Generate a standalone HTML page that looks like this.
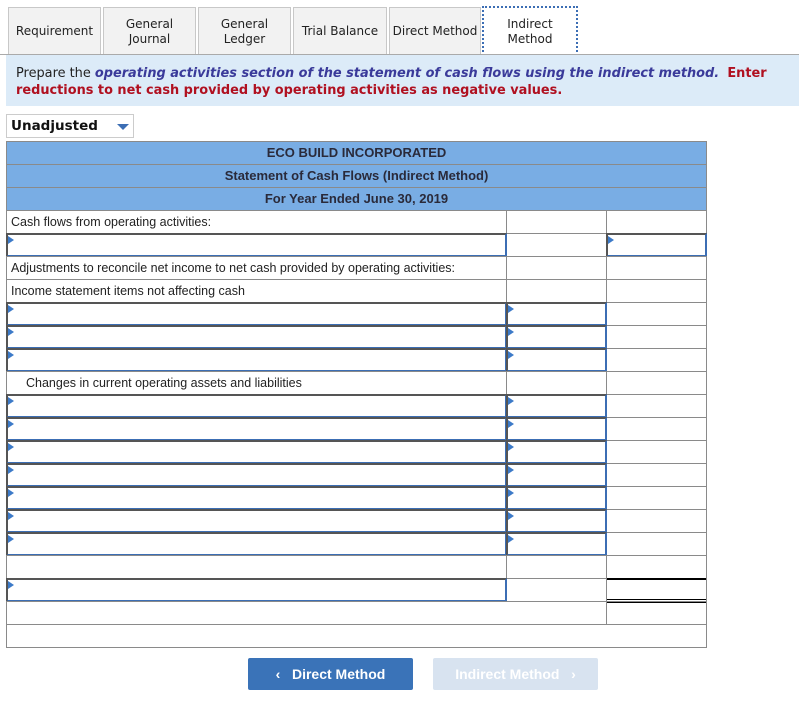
<!DOCTYPE html>
<html><head><meta charset="utf-8"><style>
body{margin:0;width:799px;height:701px;background:#fff;font-family:"DejaVu Sans","Liberation Sans",sans-serif;position:relative;overflow:hidden}
.a{position:absolute;box-sizing:border-box}
.tab{position:absolute;top:7px;height:48px;background:#f2f2f2;border:1px solid #c8c8c8;border-bottom:none;font-size:12px;color:#222;display:flex;align-items:center;justify-content:center;text-align:center;line-height:15px;box-sizing:border-box}
.cell{position:absolute;box-sizing:border-box;border:1px solid #8a8a8a;height:24px;font-family:"Liberation Sans",Arial,sans-serif;font-size:12.5px;color:#222;padding-left:4px;line-height:22px;background:#fff}
.hd{position:absolute;left:6px;width:701px;height:24px;box-sizing:border-box;border:1px solid #8a8a8a;background:#79ade4;font-family:"Liberation Sans",Arial,sans-serif;font-size:13px;font-weight:bold;color:#2a2a3a;text-align:center;line-height:22px}
.inp{position:absolute;box-sizing:border-box;border:2px solid #3c6eb4;border-top-color:#555;border-left-color:#555;height:24px;background:#fff}
.inp.n:before{content:"";position:absolute;left:0;top:1px;border-left:6px solid #3c7ac8;border-top:4px solid transparent;border-bottom:4px solid transparent}
</style></head><body>
<div class="tab" style="left:8px;width:93px">Requirement</div>
<div class="tab" style="left:103px;width:93px">General<br>Journal</div>
<div class="tab" style="left:198px;width:93px">General<br>Ledger</div>
<div class="tab" style="left:293px;width:94px">Trial Balance</div>
<div class="tab" style="left:389px;width:92px">Direct Method</div>
<div class="tab" style="left:482px;width:96px;top:6px;height:50px;background:#fff;border:2px dotted #3c6eb4;border-bottom:none">Indirect<br>Method</div>
<div class="a" style="left:0;top:54px;width:799px;height:1px;background:#aaa"></div>
<div class="a" style="left:6px;top:55px;width:793px;height:51px;background:#dcebf8;padding:10px 10px;font-size:12.9px;line-height:17px;color:#222">Prepare the <b style="color:#3a3a9a;font-style:italic">operating activities section of the statement of cash flows using the indirect method.</b>&nbsp; <b style="color:#b01020">Enter reductions to net cash provided by operating activities as negative values.</b></div>
<div class="a" style="left:6px;top:114px;width:128px;height:24px;border:1px solid #ccc;font-weight:bold;font-size:13.5px;line-height:22px;padding-left:4px;color:#111">Unadjusted<span style="position:absolute;left:110px;top:9px;border-top:6px solid #3c6eb4;border-left:6px solid transparent;border-right:6px solid transparent"></span></div>
<div class="hd" style="top:141px">ECO BUILD INCORPORATED</div>
<div class="hd" style="top:164px">Statement of Cash Flows (Indirect Method)</div>
<div class="hd" style="top:187px">For Year Ended June 30, 2019</div>
<div id="t"></div>
<script>
var h='',T=210;
function c(x,w,i,txt,st){h+='<div class="cell" style="left:'+x+'px;top:'+(T+23*i)+'px;width:'+w+'px;'+(st||'')+'">'+(txt||'')+'</div>';}
function inp(x,w,i){h+='<div class="inp n" style="left:'+x+'px;top:'+(T+23*i)+'px;width:'+w+'px"></div>';}
for(var i=0;i<18;i++){
 if(i==17){c(6,601,i);c(606,101,i);continue;}
 var t='';
 if(i==0)t='Cash flows from operating activities:';
 if(i==2)t='Adjustments to reconcile net income to net cash provided by operating activities:';
 if(i==3)t='Income statement items not affecting cash';
 if(i==7)t='<span style="padding-left:15px">Changes in current operating assets and liabilities</span>';
 c(6,501,i,t);c(506,101,i);c(606,101,i);
 if(i==1||(i>=4&&i<=6)||(i>=8&&i<=14)||i==16)inp(6,501,i);
 if((i>=4&&i<=6)||(i>=8&&i<=14))inp(506,101,i);
 if(i==1)inp(606,101,i);
}
c(6,701,18);
h+='<div class="a" style="left:607px;top:578px;width:99px;height:2px;background:#000"></div>';
h+='<div class="a" style="left:607px;top:599px;width:99px;height:4px;border-top:1px solid #000;border-bottom:1px solid #000"></div>';
document.getElementById('t').innerHTML=h;
</script>
<div class="a" style="left:248px;top:658px;width:165px;height:32px;background:#3a73b8;border-radius:2px;color:#fff;font-family:'Liberation Sans',Arial,sans-serif;font-weight:bold;font-size:14px;line-height:32px;text-align:center">&#8249;&nbsp;&nbsp; Direct Method</div>
<div class="a" style="left:433px;top:658px;width:165px;height:32px;background:#d8e3f0;border-radius:2px;color:#fff;font-family:'Liberation Sans',Arial,sans-serif;font-weight:bold;font-size:14px;line-height:32px;text-align:center">Indirect Method &nbsp;&nbsp;&#8250;</div>
</body></html>
